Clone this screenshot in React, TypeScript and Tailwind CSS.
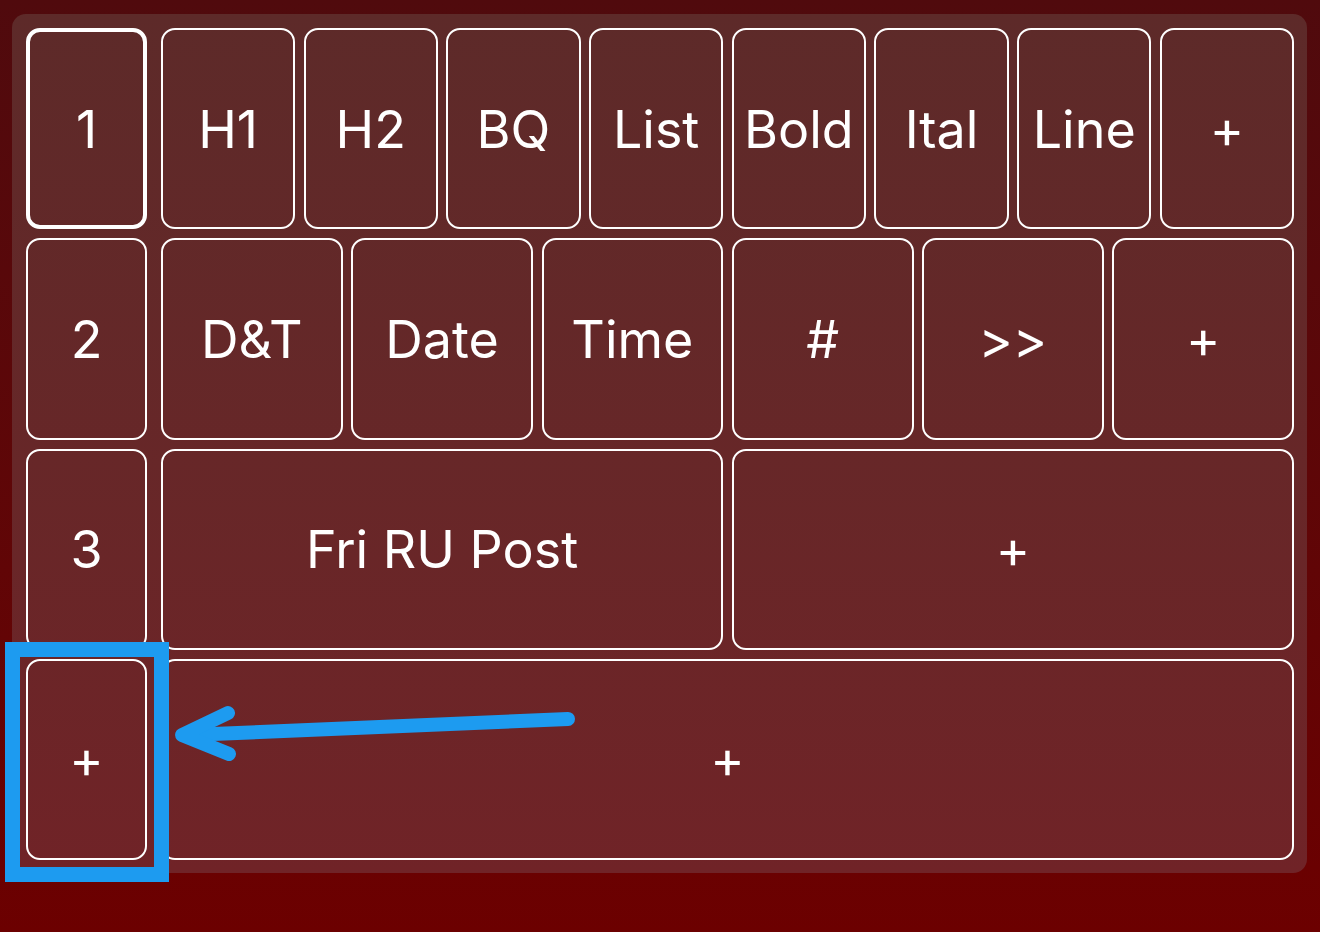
import React from "react";

const font = { fontFamily: "Inter, 'Open Sans', 'Liberation Sans', sans-serif" };

function Cell({ label, className = "", thick = false }: { label: string; className?: string; thick?: boolean }) {
  return (
    <div
      className={`flex items-center justify-center rounded-[14px] text-white text-[52px] leading-none ${
        thick ? "border-[4px]" : "border-2"
      } border-white ${className}`}
    >
      <span className="mt-[2px]">{label}</span>
    </div>
  );
}

export default function App() {
  const rows: { side: string; items: string[]; thick?: boolean }[] = [
    { side: "1", items: ["H1", "H2", "BQ", "List", "Bold", "Ital", "Line", "+"], thick: true },
    { side: "2", items: ["D&T", "Date", "Time", "#", ">>", "+"] },
    { side: "3", items: ["Fri RU Post", "+"] },
    { side: "+", items: ["+"] },
  ];
  return (
    <div
      className="relative w-[1320px] h-[932px] overflow-hidden bg-gradient-to-b from-[#500a0d] to-[#6c0000] pt-[14px] pl-[12px]"
      style={font}
    >
      <div className="w-[1295px] h-[859px] rounded-[14px] bg-gradient-to-b from-[#5d2a29] to-[#702327] pt-[14px] pl-[14px] pr-[13px] pb-[13px] flex flex-col gap-[9px]">
        {rows.map((r, i) => (
          <div key={i} className="flex flex-1 gap-[14px]">
            <Cell label={r.side} thick={r.thick} className="w-[121px] shrink-0" />
            <div className="flex flex-1 gap-[8.5px]">
              {r.items.map((it, j) => (
                <Cell key={j} label={it} className={`flex-1 ${it === "+" && r.items.length <= 2 ? "text-[48px]" : ""}`} />
              ))}
            </div>
          </div>
        ))}
      </div>

      {/* Blue highlight box */}
      <div className="absolute left-[5px] top-[642px] w-[164px] h-[240px] border-[15px] border-[#1d9bf0]" />

      {/* Arrow */}
      <svg className="absolute left-0 top-0" width="1320" height="932" viewBox="0 0 1320 932">
        <g stroke="#1d9bf0" strokeWidth="14" strokeLinecap="round" strokeLinejoin="round" fill="none">
          <line x1="568" y1="719" x2="188" y2="735" />
          <polyline points="228,713 182,735 229,754" />
        </g>
      </svg>
    </div>
  );
}
